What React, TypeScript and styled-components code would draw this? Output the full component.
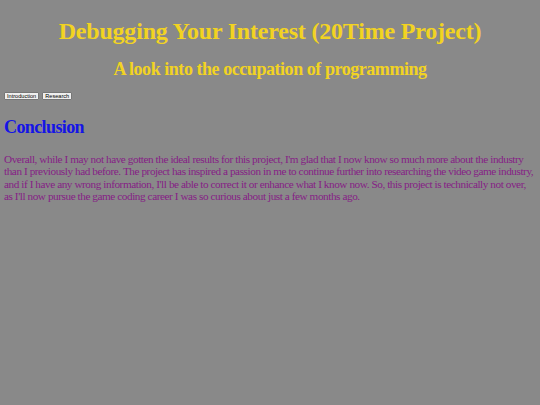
import React from 'react';
import styled, { createGlobalStyle } from 'styled-components';

const GlobalStyle = createGlobalStyle`
  html, body {
    background: #898989;
  }
  body {
    margin: 4px;
    font-family: "Liberation Serif", "Times New Roman", serif;
  }
`;

const Page = styled.main`
  display: flex;
  flex-direction: column;
`;

const Title = styled.h1`
  margin: 13px 0 0;
  font-size: 24px;
  line-height: 28px;
  font-weight: 700;
  letter-spacing: -0.2px;
  text-align: center;
  color: #f2d322;
`;

const Subtitle = styled.h2`
  margin: 13.5px 0 0;
  font-size: 18px;
  line-height: 21px;
  font-weight: 700;
  letter-spacing: -0.45px;
  text-align: center;
  color: #f2d322;
`;

const Nav = styled.nav`
  display: flex;
  gap: 3px;
  margin-top: 12.5px;
`;

const NavButton = styled.button`
  font-family: "Liberation Sans", Arial, sans-serif;
  font-size: 5.6px;
  line-height: 6px;
  padding: 0 2px;
  background: #efefef;
  border: 1px solid #767676;
  border-radius: 1px;
  color: #000;
  cursor: pointer;
`;

const SectionTitle = styled.h2`
  margin: 17px 0 0;
  font-size: 18px;
  line-height: 20px;
  font-weight: 700;
  letter-spacing: -0.6px;
  color: #1414e6;
`;

const Text = styled.p`
  margin: 15.5px 0 0;
  font-size: 11.2px;
  line-height: 12.5px;
  letter-spacing: -0.42px;
  color: #861d86;
`;

export default function App() {
  return (
    <>
      <GlobalStyle />
      <Page>
        <Title>Debugging Your Interest (20Time Project)</Title>
        <Subtitle>A look into the occupation of programming</Subtitle>
        <Nav>
          <NavButton>Introduction</NavButton>
          <NavButton>Research</NavButton>
        </Nav>
        <SectionTitle>Conclusion</SectionTitle>
        <Text>
          Overall, while I may not have gotten the ideal results for this project, I'm glad that I now know so much
          more about the industry than I previously had before. The project has inspired a passion in me to continue
          further into researching the video game industry, and if I have any wrong information, I'll be able to
          correct it or enhance what I know now. So, this project is technically not over, as I'll now pursue the
          game coding career I was so curious about just a few months ago.
        </Text>
      </Page>
    </>
  );
}
